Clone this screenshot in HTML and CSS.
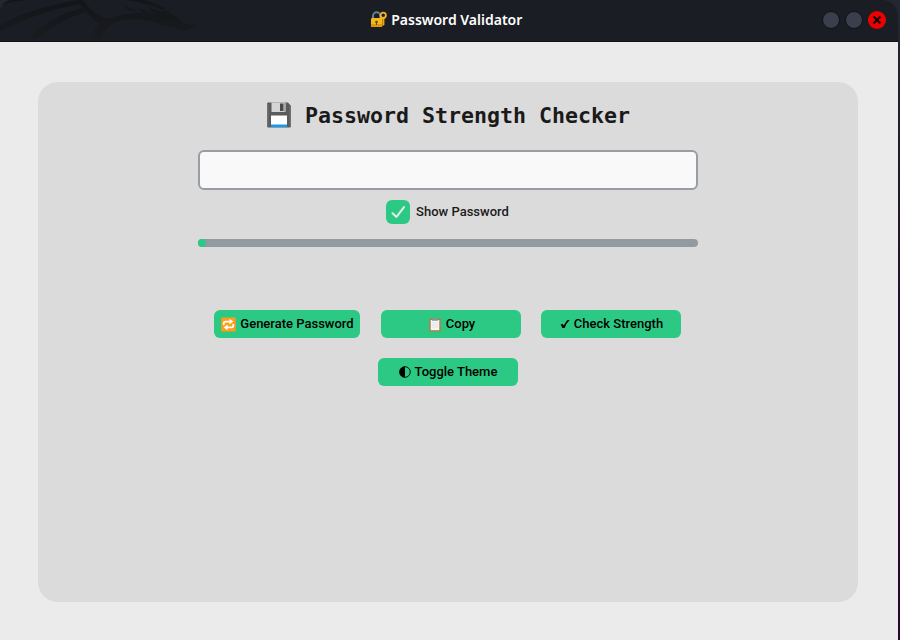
FILE: index.html
```html
<!DOCTYPE html>
<html lang="en">
<head>
<meta charset="utf-8">
<title>Password Validator</title>
<link rel="stylesheet" href="styles.css">
</head>
<body>
<div class="window">
  <header class="titlebar">
    <svg class="dragon" viewBox="0 0 210 41" width="210" height="41" aria-hidden="true">
      <defs><linearGradient id="shade" x1="0" y1="0" x2="0" y2="1"><stop offset="0" stop-color="#131519"/><stop offset="1" stop-color="#1a1b1f"/></linearGradient></defs>
      <path fill="url(#shade)" d="M0 6Q3 4 12 2L28 0H0ZM0 25Q28 9 77 0L80 4Q38 12 0 31ZM28 38Q51 16 82 8L86 12Q61 20 37 38ZM76 0H83Q97 19 110 18C126 13 142 11 157 14Q166 12 172 16L184 23Q193 27 196 23Q194 30 184 31Q174 27 161 25C145 17 122 18 112 24Q103 31 100 39H91Q94 29 99 24Q87 14 76 0ZM124 4Q127 9 140 11H132Q126 10 124 4ZM136 5Q140 10 152 12H142ZM147 6Q151 10 166 12L160 14Q150 12 147 6ZM126 0H143Q153 2 165 8L163 10Q150 4 126 0ZM165 10L180 19L177 21L160 13Z"/>
      <path d="M0 0H9Q2 2 0 9Z" fill="#2b2d33"/>
    </svg>
    <div class="caption">
      <svg class="lock" viewBox="0 0 17 17" width="17" height="17" aria-hidden="true">
        <path d="M3 8V5a3.7 3.7 0 0 1 7.4 0v3" fill="none" stroke="#62818c" stroke-width="2"/>
        <rect x="1" y="7" width="11.3" height="9" rx="1.2" fill="#f5b719"/>
        <path d="M1 13h11v2q0 1-1 1H2q-1 0-1-1z" fill="#d99b0c"/>
        <circle cx="6.5" cy="11" r="1.3" fill="#594723"/><path d="M6 11h1v3H6z" fill="#594723"/>
        <path d="M12.4 6h2v8l-2 1z" fill="#eba61a"/>
        <circle cx="13.2" cy="4.3" r="2.7" fill="none" stroke="#f6b51e" stroke-width="1.8"/>
      </svg>
      <span class="caption-text">Password Validator</span>
    </div>
    <div class="controls">
      <span class="dot"></span><span class="dot"></span>
      <span class="dot close"><svg viewBox="0 0 18 18" width="18" height="18"><path d="M5.5 5.5l7 7M12.5 5.5l-7 7" stroke="#160404" stroke-width="2.2"/></svg></span>
    </div>
  </header>
  <main class="content">
    <section class="card">
      <h1 class="heading">
        <svg viewBox="0 0 26 26" width="26" height="26" aria-hidden="true">
          <path d="M2 .5h20L25 4v20a1.5 1.5 0 0 1-1.5 1.5h-21A1.5 1.5 0 0 1 1 24V2A1.5 1.5 0 0 1 2 .5z" fill="#5b5b5b"/>
          <path d="M1 2h1.5v23L1 24zM23.5 3L25 4v20l-1.5 1z" fill="#707070"/>
          <path d="M5.5.5h14V10h-14z" fill="#d5d5d5"/><path d="M14 1.5h3.5V9H14z" fill="#4a4a4a"/><path d="M18 .5h1.5V10H18z" fill="#aaa"/>
          <path d="M5 13.5h16V23H5z" fill="#fff"/><path d="M5 22.5h16v2.5H5z" fill="#119cef"/>
        </svg>
        <span>Password Strength Checker</span>
      </h1>
      <input class="field" type="text" aria-label="Password">
      <div class="show">
        <span class="check"><svg viewBox="0 0 24 24" width="24" height="24"><path d="M6.5 13.2l4 3.7 7.5-9.8" fill="none" stroke="#e2eee7" stroke-width="2" stroke-linecap="round" stroke-linejoin="round"/></svg></span>
        <span>Show Password</span>
      </div>
      <div class="meter"><div class="level"></div></div>
      <div class="actions">
        <button class="btn generate">
          <svg viewBox="0 0 15 15" width="15" height="15" aria-hidden="true"><rect x=".3" y=".5" width="14.4" height="14" rx="1.2" fill="#ff9d16"/><path d="M2.7 8V6.4Q2.7 4.6 4.7 4.6H9M12.3 7v1.6q0 1.8-2 1.8H6" fill="none" stroke="#fff" stroke-width="1.8"/><path d="M8.5 1.7l3.8 2.9-3.8 2.9zM6.5 7.5v5.8L2.7 10.4z" fill="#fff"/></svg>
          <span>Generate Password</span>
        </button>
        <button class="btn copy">
          <svg viewBox="0 0 12 15" width="12" height="15" aria-hidden="true"><rect x=".3" y="1.5" width="11.4" height="13" rx="1" fill="#bd7649"/><path d="M1.7 3h8.6v10.2H1.7z" fill="#f5f5f3"/><path d="M3 3.8V2.2h1.5Q4.5.5 6 .5t1.5 1.7H9v1.6z" fill="#7e9ba4"/><path d="M3 6h6M3 8h6M3 10h6" stroke="#dce0e0" stroke-width=".7"/></svg>
          <span>Copy</span>
        </button>
        <button class="btn strength">
          <svg viewBox="0 0 10 10" width="10" height="10" aria-hidden="true"><path d="M.6 5.8Q1.8 4.6 2.8 5L3.8 6.4Q5.6 2.8 7.6 1H9.6Q6.4 4.2 4.6 9H2.4Q1.6 7 .6 5.8z"/></svg>
          <span>Check Strength</span>
        </button>
      </div>
      <button class="btn theme">
        <svg viewBox="0 0 12 12" width="12" height="12" aria-hidden="true"><circle cx="6" cy="6" r="5.3" fill="none" stroke="#000" stroke-width=".9"/><path d="M6 .4a5.6 5.6 0 0 0 0 11.2z"/></svg>
        <span>Toggle Theme</span>
      </button>
    </section>
  </main>
</div>
</body>
</html>
```
FILE: styles.css
```css
* { box-sizing: border-box; }
body {
  margin: 0;
  width: 900px;
  height: 640px;
  overflow: hidden;
  background: linear-gradient(#242731 0, #20222e 80px, #24112d 300px, #26052e 640px);
  font-family: Roboto, sans-serif;
}
.window {
  width: 898px;
  height: 640px;
  display: flex;
  flex-direction: column;
  border-radius: 12px 16px 0 0;
  overflow: hidden;
}
.titlebar {
  position: relative;
  height: 42px;
  flex: none;
  background: #1b1d24;
  border-bottom: 1px solid #111317;
  display: flex;
  align-items: center;
  justify-content: center;
}
.dragon { position: absolute; left: 0; top: 0; }
.caption {
  display: flex;
  align-items: center;
  gap: 4.5px;
  padding-bottom: 2px;
  margin-right: 5px;
}
.caption-text {
  width: 132px;
  color: #fff;
  font: 600 14px/20px "Noto Sans", sans-serif;
  white-space: nowrap;
}
.controls { position: absolute; right: 12px; top: 11px; display: flex; gap: 5px; }
.dot {
  width: 18px;
  height: 18px;
  border-radius: 50%;
  background: #3b3e4d;
  border: 1px solid #101115;
}
.close { background: #ed0000; border: 0; }
.close svg { display: block; }
.content { flex: 1; background: #ebebeb; padding: 40px 40px 38px 38px; }
.card {
  height: 520px;
  border-radius: 20px;
  background: #dbdbdb;
  display: flex;
  flex-direction: column;
  align-items: center;
}
.heading {
  margin: 20px 0 0;
  height: 28px;
  display: flex;
  align-items: center;
  gap: 13px;
  color: #1a1a1a;
  font: bold 21.6px/28px "DejaVu Sans Mono", monospace;
  white-space: nowrap;
}
.heading svg { margin-bottom: 2px; }
.field {
  margin-top: 20px;
  width: 500px;
  height: 40px;
  border: 2px solid #979da2;
  border-radius: 6px;
  background: #f9f9fa;
  padding: 0 10px;
  outline: 0;
}
.show {
  margin: 10px 1px 0 0;
  height: 24px;
  display: flex;
  gap: 6px;
  color: #1a1a1a;
  font-size: 13px;
  font-weight: 500;
  line-height: 24px;
}
.check { width: 24px; height: 24px; border-radius: 6px; background: #2cc985; }
.check svg { display: block; }
.meter { margin-top: 15px; width: 500px; height: 8px; border-radius: 4px; background: #939ba2; }
.level { width: 8px; height: 8px; border-radius: 4px; background: #2cc985; }
.actions { margin: 63px 1px 0 0; display: flex; gap: 20px; }
.btn {
  width: 140px;
  height: 28px;
  border: 0;
  border-radius: 6px;
  padding: 0;
  background: #2cc985;
  color: #000;
  display: flex;
  align-items: center;
  justify-content: center;
  gap: 4px;
  font: 500 13px/28px Roboto, sans-serif;
  white-space: nowrap;
}
.generate { width: 146px; margin-right: 1px; padding-left: 1px; }
.copy { gap: 5px; padding-left: 2px; }
.strength { padding-left: 1px; }
.theme { margin-top: 20px; }
```
